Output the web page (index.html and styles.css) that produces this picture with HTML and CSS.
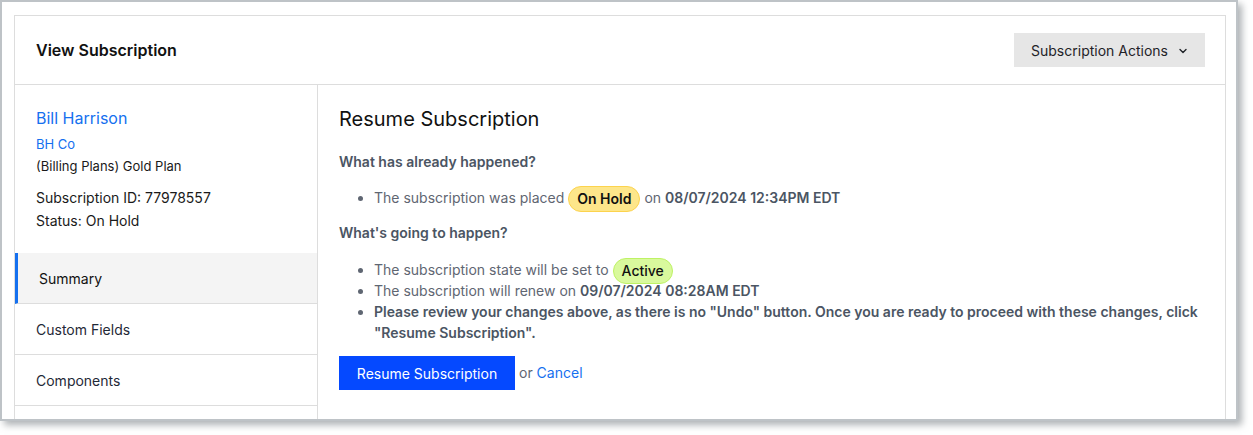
FILE: index.html
```html
<!DOCTYPE html>
<html lang="en">
<head>
<meta charset="utf-8">
<title>View Subscription</title>
<link rel="stylesheet" href="styles.css">
</head>
<body>
<div class="frame">
  <div class="card">
    <div class="card-header">
      <h1 class="card-title">View Subscription</h1>
      <button class="actions-btn" type="button">Subscription Actions
        <svg class="chev" width="10" height="10" viewBox="0 0 10 10" aria-hidden="true"><path d="M2 3.6 L5 6.6 L8 3.6" fill="none" stroke="#1f2328" stroke-width="1.4" stroke-linecap="round" stroke-linejoin="round"/></svg>
      </button>
    </div>
    <div class="card-body">
      <aside class="sidebar">
        <div class="info">
          <a class="customer" href="#">Bill Harrison</a>
          <a class="company" href="#">BH Co</a>
          <div class="plan">(Billing Plans) Gold Plan</div>
          <div class="meta sub-id">Subscription ID: 77978557</div>
          <div class="meta">Status: On Hold</div>
        </div>
        <nav class="nav">
          <div class="nav-item active">Summary</div>
          <div class="nav-item">Custom Fields</div>
          <div class="nav-item">Components</div>
          <div class="nav-item"></div>
        </nav>
      </aside>
      <main class="main">
        <h2 class="main-title">Resume Subscription</h2>
        <p class="section-label">What has already happened?</p>
        <ul class="list first">
          <li>The subscription was placed <span class="badge hold">On Hold</span> on <b>08/07/2024 12:34PM EDT</b></li>
        </ul>
        <p class="section-label">What's going to happen?</p>
        <ul class="list second">
          <li>The subscription state will be set to <span class="badge active">Active</span></li>
          <li>The subscription will renew on <b>09/07/2024 08:28AM EDT</b></li>
          <li><b>Please review your changes above, as there is no "Undo" button. Once you are ready to proceed with these changes, click "Resume Subscription".</b></li>
        </ul>
        <div class="actions">
          <button class="primary" type="button">Resume Subscription</button>
          <span class="or">or <a href="#" class="cancel">Cancel</a></span>
        </div>
      </main>
    </div>
  </div>
</div>
</body>
</html>
```
FILE: styles.css
```css
* { box-sizing: border-box; }
html, body { margin: 0; padding: 0; background: #ffffff; }
body {
  font-family: Inter, "Noto Sans", "Liberation Sans", sans-serif;
  color: #1f2328;
  width: 1253px;
  height: 435px;
  overflow: hidden;
}
.frame {
  width: 1238px;
  height: 421px;
  border: 2px solid #bec3c7;
  background: #ffffff;
  box-shadow: 4px 4px 7px rgba(110, 116, 122, 0.55);
  padding: 13px 0 0 12px;
  overflow: hidden;
}
.card {
  width: 1212px;
  border: 1px solid #dddddd;
  background: #ffffff;
}
.card-header {
  height: 69px;
  border-bottom: 1px solid #dddddd;
  display: flex;
  align-items: center;
  justify-content: space-between;
  padding: 0 20px 0 21px;
}
.card-title {
  margin: 0;
  font-size: 16px;
  font-weight: 600;
  color: #111111;
}
.actions-btn {
  height: 34px;
  width: 191px;
  border: 0;
  background: #e6e6e6;
  font-family: inherit;
  font-size: 14px;
  color: #1f2328;
  display: flex;
  align-items: center;
  justify-content: center;
  gap: 10px;
  padding: 0 8px 0 8px;
}
.chev { display: block; margin-top: 1px; }
.card-body {
  display: flex;
  min-height: 420px;
}
.sidebar {
  width: 303px;
  flex: 0 0 303px;
  border-right: 1px solid #dddddd;
}
.info {
  padding: 22px 21px 21px 21px;
  display: flex;
  flex-direction: column;
}
.customer {
  font-size: 16px;
  line-height: 22px;
  color: #1570ef;
  text-decoration: none;
}
.company {
  margin-top: 4px;
  font-size: 13px;
  line-height: 22px;
  color: #1570ef;
  text-decoration: none;
}
.plan {
  font-size: 13px;
  line-height: 22px;
  color: #1a1a1a;
}
.meta {
  font-size: 14px;
  line-height: 22px;
  color: #1a1a1a;
}
.sub-id { margin-top: 10px; }
.meta + .meta { margin-top: 1px; }
.nav-item {
  height: 51px;
  border-bottom: 1px solid #dddddd;
  padding-left: 21px;
  display: flex;
  align-items: center;
  font-size: 14px;
  color: #1f2937;
}
.nav-item.active {
  background: #f4f4f4;
  border-left: 3px solid #1570ef;
  padding-left: 21px;
  color: #111111;
}
.main {
  flex: 1;
  padding: 22px 21px 0 21px;
}
.main-title {
  margin: 0;
  font-size: 20px;
  line-height: 24px;
  font-weight: 400;
  color: #111111;
}
.section-label {
  margin: 20px 0 0;
  font-size: 14px;
  line-height: 21px;
  font-weight: 600;
  color: #4b5563;
}
.list {
  margin: 15px 0 0;
  padding-left: 35px;
  font-size: 14px;
  line-height: 21px;
  color: #5f6672;
}
.list.second { margin-top: 16px; }
.list + .section-label { margin-top: 14px; }
.list b { font-weight: 600; color: #4b5563; }
.badge {
  display: inline-block;
  line-height: 24px;
  padding: 0 8px;
  border-radius: 13px;
  margin: -5px 0;
  vertical-align: middle;
  color: #111111;
}
.badge.hold {
  background: #fde68a;
  border: 1px solid #fcd34d;
  font-weight: 600;
}
.badge.active {
  background: #d9f99d;
  border: 1px solid #bef264;
  font-weight: 500;
}
.actions {
  margin-top: 13px;
  display: flex;
  align-items: center;
  gap: 4px;
}
.primary {
  height: 34px;
  width: 176px;
  border: 0;
  background: #0549ff;
  color: #ffffff;
  font-family: inherit;
  font-size: 14px;
  padding: 0;
}
.or {
  font-size: 14px;
  color: #5f6672;
  margin-top: -2px;
}
.cancel { color: #1570ef; text-decoration: none; }
```
